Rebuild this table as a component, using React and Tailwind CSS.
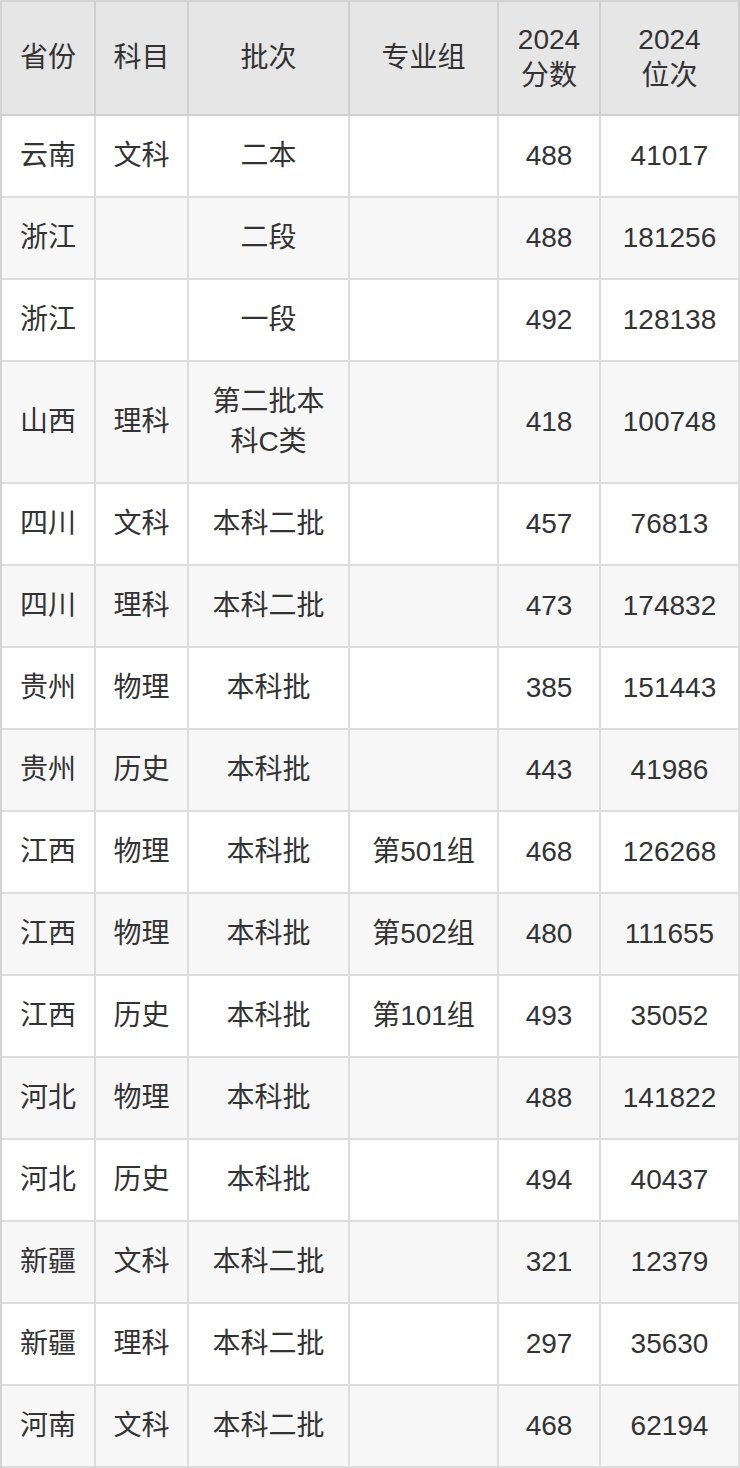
import React from 'react';

const rows = [
  ['云南', '文科', '二本', '', '488', '41017'],
  ['浙江', '', '二段', '', '488', '181256'],
  ['浙江', '', '一段', '', '492', '128138'],
  ['山西', '理科', '第二批本科C类', '', '418', '100748'],
  ['四川', '文科', '本科二批', '', '457', '76813'],
  ['四川', '理科', '本科二批', '', '473', '174832'],
  ['贵州', '物理', '本科批', '', '385', '151443'],
  ['贵州', '历史', '本科批', '', '443', '41986'],
  ['江西', '物理', '本科批', '第501组', '468', '126268'],
  ['江西', '物理', '本科批', '第502组', '480', '111655'],
  ['江西', '历史', '本科批', '第101组', '493', '35052'],
  ['河北', '物理', '本科批', '', '488', '141822'],
  ['河北', '历史', '本科批', '', '494', '40437'],
  ['新疆', '文科', '本科二批', '', '321', '12379'],
  ['新疆', '理科', '本科二批', '', '297', '35630'],
  ['河南', '文科', '本科二批', '', '468', '62194'],
];

const headers = ['省份', '科目', '批次', '专业组', '2024\n分数', '2024\n位次'];

const App = () => {
  return (
    <div
      className="w-[740px] bg-white text-[#333] text-[28px]"
      style={{ fontFamily: '"Liberation Sans", "Noto Sans CJK SC", sans-serif' }}
    >
      <div className="grid grid-cols-[94px_93px_161px_149px_102px_139px] border-l-2 border-t-2 border-[#d4d4d4]">
        {/* Header */}
        {headers.map((h, i) => (
          <div
            key={`h${i}`}
            className="flex items-center justify-center text-center px-4 pt-[20px] pb-[20px] leading-[36px] bg-[#e6e6e6] border-r-2 border-b-2 border-[#cfcfcf] whitespace-pre-line"
          >
            {h}
          </div>
        ))}

        {/* Body */}
        {rows.map((r, ri) =>
          r.map((c, ci) => (
            <div
              key={`${ri}-${ci}`}
              className={`flex items-center justify-center text-center px-4 py-[20px] leading-[40px] border-r-2 border-b-2 border-[#dddddd] ${
                ri % 2 === 1 ? 'bg-[#f7f7f7]' : 'bg-white'
              }`}
            >
              {c}
            </div>
          ))
        )}
      </div>
    </div>
  );
};

export default App;
